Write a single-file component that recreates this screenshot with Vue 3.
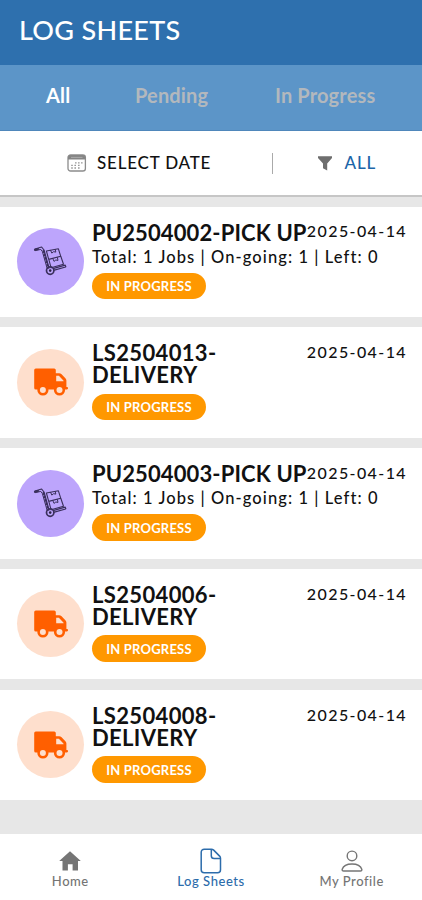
<template>
  <div class="screen">
    <header class="header">
      <h1 class="title">LOG SHEETS</h1>
    </header>

    <nav class="tabs">
      <a
        v-for="tab in tabs"
        :key="tab.id"
        class="tab"
        :class="[tab.id, { active: activeTab === tab.id }]"
        @click="activeTab = tab.id"
      >{{ tab.label }}</a>
    </nav>

    <div class="filters">
      <div class="filter-date">
        <svg class="calendar-icon" viewBox="0 0 20 18">
          <rect x="1" y="1" width="17.4" height="16" rx="2.6" fill="#fff" stroke="#8c8c8c" stroke-width="1.3" />
          <path d="M1 5.6V3.4A2.6 2.6 0 0 1 3.6.9h12.2a2.6 2.6 0 0 1 2.6 2.5v2.2z" fill="#858585" />
          <path d="M4 3.4h11.5" stroke="#b5b5b5" stroke-width="0.8" />
          <path d="M8 8.9h1.6M11 8.9h1.6M14 8.9h1.6M4.2 11.4h1.6M7.4 11.4H9M11 11.4h1.6M4.2 14h1.6M7.4 14H9M11 14h1.6" stroke="#999" stroke-width="1.3" />
        </svg>
        <span class="select-date">SELECT DATE</span>
      </div>
      <div class="filter-status">
        <svg class="funnel-icon" viewBox="0 0 14 15">
          <path d="M0 .2h14v1.7L9.200 7.400v7.200L5 12.200V7.400L0 1.900z" fill="#6e6e6e" />
        </svg>
        <span class="filter-all">ALL</span>
      </div>
    </div>

    <main class="list">
      <article v-for="sheet in sheets" :key="sheet.title" class="card">
        <div class="avatar" :class="sheet.type">
          <svg v-if="sheet.type === 'pickup'" class="trolley-icon" viewBox="0 0 36 32">
            <g fill="none" stroke="#3a2f5c" stroke-linecap="round" stroke-linejoin="round">
              <path d="M2 4 8.600 2 11 5l5 18" stroke-width="1.200" />
              <path d="M2.400 5.600 7.800 4.400 9.400 6.600l4.800 17" stroke-width="1" />
              <path d="M2 4.800 5 4" stroke-width="2.200" />
              <path d="m10.400 5.800 4.900 17" stroke-width="1.600" stroke-dasharray="1.500 2" />
              <path d="m13.400 6 12-2.200 2.300 7.400-12 3.200zM15.800 14.400l12-3.200 2.700 8-12.400 3.600z" stroke-width="1.100" />
              <path d="m17.600 5.300 1.200 2.800 1.800-1.400 2.200.4-.6-2.700M19.800 13.500l1.200 2.900 1.800-1.400 2.200.4-.6-2.800" stroke-width="1" />
              <path d="m21.400 25.200 11.200-3.200M20.800 23.400l11.400-3.200.6 1.600" stroke-width="1.200" />
              <circle cx="17.200" cy="25.600" r="3.700" stroke-width="1.700" />
            </g>
            <circle cx="17.200" cy="25.600" r="1.300" fill="#2b2346" />
          </svg>
          <svg v-else class="truck-icon" viewBox="0 0 34 28">
            <path d="M1.8.5h18.400a1.600 1.600 0 0 1 1.600 1.600v3.100h3.400c.8 0 1.500.3 2.100.9l4.300 4.500c.5.6.8 1.200.8 2v6.500h.5c.7 0 1.100.5 1.100 1.200s-.4 1.200-1.100 1.200H1.800A1.600 1.600 0 0 1 .2 19.900V2.100A1.600 1.600 0 0 1 1.800.5z" fill="#ff5f00" />
            <path d="M22.200 7.800h2.700l4.700 4.900v.5h-7.400z" fill="#fedfcd" />
            <circle cx="8.900" cy="22" r="5.600" fill="#ff5f00" />
            <circle cx="8.900" cy="22" r="3" fill="#fedfcd" />
            <circle cx="25.500" cy="22" r="5.600" fill="#ff5f00" />
            <circle cx="25.500" cy="22" r="3" fill="#fedfcd" />
          </svg>
        </div>
        <div class="info">
          <div class="info-top">
            <h2 class="sheet-title" :class="sheet.type">{{ sheet.title }}</h2>
            <time class="date">{{ sheet.date }}</time>
          </div>
          <p v-if="sheet.summary" class="summary">{{ sheet.summary }}</p>
          <span class="badge">IN PROGRESS</span>
        </div>
      </article>
    </main>

    <footer class="bottom-nav">
      <a class="nav-item home">
        <svg class="nav-icon" viewBox="0 0 24 26">
          <path d="M12 3.200 22.800 13h-2.800v9.400h-5.400v-6.200H9.900v6.200H4.500V13H1.200L12 3.200z" fill="#757575" />
        </svg>
        <span>Home</span>
      </a>
      <a class="nav-item sheets current">
        <svg class="nav-icon" viewBox="0 0 24 26">
          <path d="M5.200 1.200h7.200c1 0 1.600.3 2.300.9l5.900 6c.6.700.9 1.300.9 2.200v11.500a3 3 0 0 1-3 3H5.200a3 3 0 0 1-3-3V4.200a3 3 0 0 1 3-3z" fill="none" stroke="#2c6cab" stroke-width="1.500" />
          <path d="M12.300 1.400v6.400a2.800 2.800 0 0 0 2.800 2.800h6.200" fill="none" stroke="#2c6cab" stroke-width="1.500" />
        </svg>
        <span>Log Sheets</span>
      </a>
      <a class="nav-item profile">
        <svg class="nav-icon" viewBox="0 0 24 26">
          <circle cx="12" cy="7.900" r="4.800" fill="none" stroke="#757575" stroke-width="1.400" />
          <path d="M3.600 23c-1 0-1.700-.8-1.400-1.800 1.100-3.400 5-5.200 9.800-5.200s8.700 1.800 9.800 5.200c.3 1-.4 1.800-1.400 1.800z" fill="none" stroke="#757575" stroke-width="1.400" />
        </svg>
        <span>My Profile</span>
      </a>
    </footer>
  </div>
</template>

<script setup>
import { ref } from 'vue';

const activeTab = ref('all');

const tabs = [
  { id: 'all', label: 'All' },
  { id: 'pending', label: 'Pending' },
  { id: 'progress', label: 'In Progress' },
];

const jobs = 'Total: 1 Jobs | On-going: 1 | Left: 0';

const sheets = ref([
  { title: 'PU2504002-PICK UP', type: 'pickup', date: '2025-04-14', summary: jobs },
  { title: 'LS2504013-DELIVERY', type: 'delivery', date: '2025-04-14' },
  { title: 'PU2504003-PICK UP', type: 'pickup', date: '2025-04-14', summary: jobs },
  { title: 'LS2504006-DELIVERY', type: 'delivery', date: '2025-04-14' },
  { title: 'LS2504008-DELIVERY', type: 'delivery', date: '2025-04-14' },
]);
</script>

<style>
body {
  margin: 0;
}
</style>

<style scoped>
.screen {
  display: flex;
  flex-direction: column;
  width: 422px;
  height: 900px;
  overflow: hidden;
  background: #e7e7e7;
  color: #111;
  font-family: Lato, 'Open Sans', sans-serif;
}

.header {
  box-sizing: border-box;
  height: 65px;
  padding: 12px 19px 0;
  background: #2e70ae;
}

.title {
  margin: 0;
  color: #fff;
  font-size: 27px;
  font-weight: 500;
  line-height: 36px;
  letter-spacing: 0.3px;
}

.tabs {
  display: flex;
  box-sizing: border-box;
  height: 66px;
  padding: 17px 0 0 46px;
  background: #5c95c8;
  border-bottom: 1px solid #4f87bb;
}

.tab {
  color: #b3b8bd;
  font-size: 20px;
  font-weight: 700;
  line-height: 26px;
  letter-spacing: 0.15px;
  white-space: nowrap;
}

.tab.all {
  width: 89px;
}

.tab.pending {
  width: 140px;
}

.tab.active {
  color: #fff;
}

.filters {
  display: flex;
  align-items: center;
  height: 64px;
  background: #fff;
  border-bottom: 2px solid #c6c6c6;
}

.filter-date {
  display: flex;
  align-items: center;
  box-sizing: border-box;
  width: 272.5px;
  height: 21px;
  padding-left: 67px;
  border-right: 1px solid #aaa;
}

.calendar-icon {
  width: 20px;
  height: 18px;
  margin-right: 10px;
}

.select-date,
.filter-all {
  font-size: 17px;
  font-weight: 500;
  line-height: 22px;
  letter-spacing: 0.8px;
  white-space: nowrap;
}

.filter-status {
  display: flex;
  align-items: center;
  padding-left: 45px;
}

.funnel-icon {
  width: 14px;
  height: 15px;
  margin-right: 13px;
}

.filter-all {
  color: #1c65a8;
}

.list {
  display: flex;
  flex: 1;
  flex-direction: column;
  gap: 10.7px;
  padding-top: 9.6px;
}

.card {
  display: flex;
  box-sizing: border-box;
  height: 110.2px;
  padding: 15px 0 0 17px;
  background: #fff;
}

.avatar {
  display: flex;
  align-items: center;
  justify-content: center;
  width: 67px;
  height: 67px;
  margin: 6.2px 8px 0 0;
  border-radius: 50%;
}

.avatar.pickup {
  background: #bda5fc;
}

.avatar.delivery {
  background: #fedfcd;
}

.trolley-icon {
  width: 36px;
  height: 32px;
}

.truck-icon {
  width: 34px;
  height: 28px;
}

.info-top {
  display: flex;
  justify-content: space-between;
  width: 315px;
}

.sheet-title {
  margin: 0;
  font-size: 22px;
  font-weight: 700;
  line-height: 22px;
}

.sheet-title.pickup {
  width: 215px;
  letter-spacing: 0.12px;
  white-space: nowrap;
}

.sheet-title.delivery {
  width: 150px;
  margin-bottom: 7.2px;
  letter-spacing: 0.35px;
}

.date {
  margin-top: -0.6px;
  font-size: 16px;
  font-weight: 500;
  line-height: 20px;
  letter-spacing: 1.4px;
  white-space: nowrap;
}

.summary {
  margin: 3px 0 6px;
  font-size: 16.5px;
  font-weight: 500;
  line-height: 20px;
  letter-spacing: 1.08px;
  white-space: nowrap;
}

.badge {
  display: flex;
  align-items: center;
  justify-content: center;
  width: 114px;
  height: 26.5px;
  border-radius: 14px;
  background: #ff9800;
  color: #fff;
  font-size: 13px;
  font-weight: 700;
  letter-spacing: 0.2px;
}

.bottom-nav {
  display: grid;
  grid-template-columns: repeat(3, 1fr);
  box-sizing: border-box;
  height: 66px;
  padding-top: 14px;
  background: #fff;
}

.nav-item {
  display: flex;
  flex-direction: column;
  align-items: center;
  color: #757575;
  font-size: 13px;
  font-weight: 500;
  line-height: 15px;
  letter-spacing: 0.55px;
}

.nav-item.current {
  color: #2c6cab;
}

.nav-icon {
  width: 24px;
  height: 26px;
}
</style>
